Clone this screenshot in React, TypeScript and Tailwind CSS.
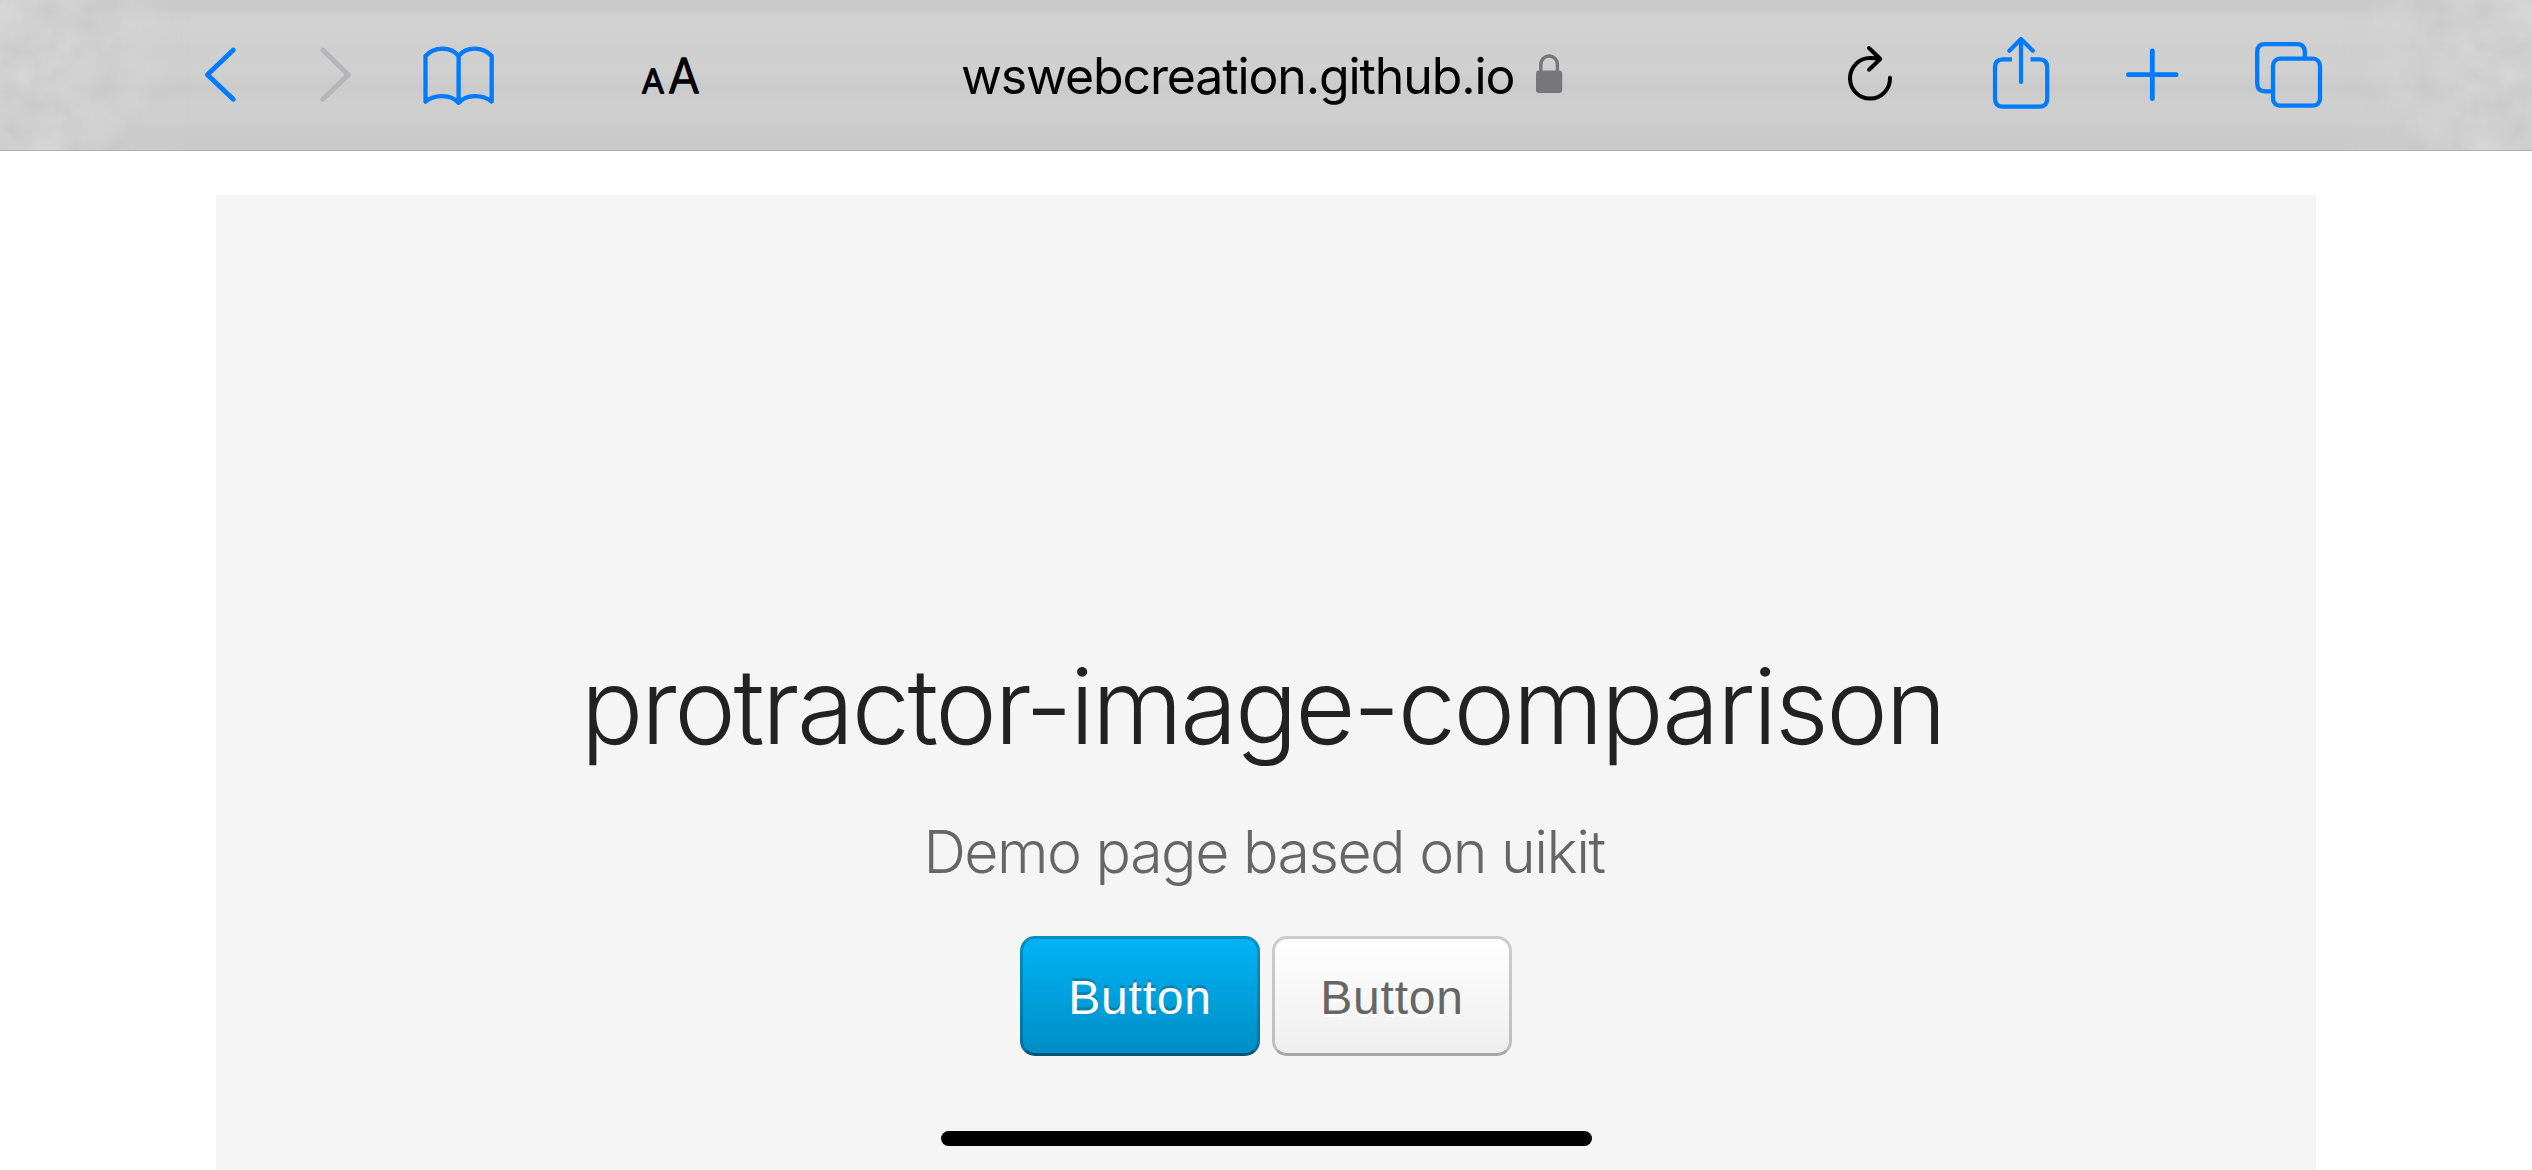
import React from "react";

const line = {
  fill: "none",
  stroke: "currentColor",
  strokeLinecap: "round" as const,
  strokeLinejoin: "round" as const,
};

function Mottle({ id, className }: { id: string; className: string }) {
  return (
    <svg className={className} viewBox="0 0 190 150" preserveAspectRatio="none">
      <filter id={id} x="0" y="0" width="100%" height="100%" colorInterpolationFilters="sRGB">
        <feTurbulence type="fractalNoise" baseFrequency="0.024" numOctaves="3" seed="4" />
        <feColorMatrix values="0.09 0 0 0 0.772  0.09 0 0 0 0.772  0.09 0 0 0 0.772  0 0 0 0 1" />
      </filter>
      <rect width="190" height="150" filter={`url(#${id})`} />
    </svg>
  );
}

function Toolbar() {
  return (
    <header className="relative flex h-[151px] w-full items-start border-b border-[#b0b0b0] bg-[linear-gradient(180deg,#c9c9c9_0px,#cacaca_9px,#d0d0d0_15px,#d2d2d2_24px,#d1d1d1_40px,#cfcfcf_45px,#d0d0d0_70px,#cbcbcb_88px,#cfcfcf_104px,#cfcfcf_118px,#cbcbcb_130px,#cacaca_150px)] text-[#007aff]">
      <Mottle
        id="mottle-left"
        className="absolute left-0 top-0 h-[150px] w-[190px] [mask-image:linear-gradient(90deg,#000_30%,transparent)]"
      />
      <Mottle
        id="mottle-right"
        className="absolute right-0 top-0 h-[150px] w-[190px] -scale-x-100 [mask-image:linear-gradient(90deg,#000_30%,transparent)]"
      />
      <svg className="ml-[200px] h-[150px] w-[40px]" viewBox="200 0 40 150" {...line} strokeWidth="4.8">
        <path d="M233.3 50L207.4 74.7L233.3 99.3" />
      </svg>
      <svg className="ml-[75px] h-[150px] w-[40px] text-[#b5b5b8]" viewBox="315 0 40 150" {...line} strokeWidth="4.8">
        <path d="M322.7 50L348.4 74.7L322.7 99.3" />
      </svg>
      <svg className="ml-[65px] h-[150px] w-[76px]" viewBox="420 0 76 150" {...line} strokeWidth="4.3">
        <path d="M458.6 56V102.8C451 94 434.5 94 425.5 101.6V56C434.5 46.2 451 46.2 458.6 56C466.2 46.2 482.7 46.2 491.7 56V101.6C482.7 94 466.2 94 458.6 102.8" />
      </svg>
      <svg className="ml-[139px] h-[150px] w-[75px]" viewBox="635 0 75 150">
        <g
          fill="#000"
          stroke="#000"
          strokeLinejoin="round"
          className="font-[Inter,sans-serif]"
          fontWeight="300"
        >
          <text x="641.8" y="92.6" fontSize="33" strokeWidth="1.8" textLength="22.5" lengthAdjust="spacingAndGlyphs">A</text>
          <text x="668.2" y="92.6" fontSize="47.5" strokeWidth="1.6" textLength="31.3" lengthAdjust="spacingAndGlyphs">A</text>
        </g>
      </svg>
      <div className="ml-[251px] w-[570px] whitespace-nowrap pt-[44px] font-[Inter,sans-serif] text-[50px] leading-[64px] tracking-[-1.12px] text-black">
        wswebcreation.github.io
      </div>
      <svg className="ml-[4px] h-[150px] w-[30px] text-[#77777b]" viewBox="1535 0 30 150">
        <rect x="1536" y="70.5" width="26.2" height="22.5" rx="3" fill="currentColor" />
        <path d="M1540.8 72V65C1540.8 53 1557.4 53 1557.4 65V72" fill="none" stroke="currentColor" strokeWidth="3.4" />
      </svg>
      <svg className="ml-[275px] h-[150px] w-[60px] text-black" viewBox="1840 0 60 150" {...line} strokeWidth="4">
        <path d="M1890 77.7A20 20.3 0 1 1 1870 58Q1875 58 1880 59M1869 48L1880.3 59L1869 69.7" />
      </svg>
      <svg className="ml-[90px] h-[150px] w-[62px]" viewBox="1990 0 62 150" {...line} strokeWidth="4.2">
        <path d="M2012 59.4H2003Q1995 59.4 1995 67.4V98.7Q1995 106.7 2003 106.7H2039.2Q2047.2 106.7 2047.2 98.7V67.4Q2047.2 59.4 2039.2 59.4H2030.5" strokeLinecap="butt" />
        <path d="M2021 39.5V82M2009.4 50.8L2021 39L2032.8 50.8" />
      </svg>
      <svg className="ml-[68px] h-[150px] w-[62px]" viewBox="2120 0 62 150" {...line} strokeWidth="4.8">
        <path d="M2152.3 50.8V98.7M2128.4 74.7H2176.2" />
      </svg>
      <svg className="ml-[68px] h-[150px] w-[80px]" viewBox="2250 0 80 150" {...line} strokeWidth="4.3">
        <path d="M2304.8 58V52Q2304.8 44.2 2297 44.2H2265Q2257.2 44.2 2257.2 52V83.5Q2257.2 91.3 2265 91.3H2272" strokeLinecap="butt" />
        <rect x="2273" y="58.7" width="47" height="47" rx="7" />
      </svg>
    </header>
  );
}

export default function App() {
  return (
    <div className="flex h-[1170px] w-[2532px] flex-col overflow-hidden bg-white">
      <Toolbar />
      <main className="relative mx-[216px] mt-[44px] flex flex-1 flex-col items-center bg-[#f5f5f5]">
        <h1 className="mr-[7px] mt-[446px] whitespace-nowrap font-[Inter,sans-serif] text-[104px] font-light leading-[130px] tracking-[-2.4px] text-[#222]">
          protractor-image-comparison
        </h1>
        <p className="mr-[4px] mt-[41px] whitespace-nowrap font-[Inter,sans-serif] text-[59px] font-light leading-[80px] tracking-[-1.5px] text-[#666]">
          Demo page based on uikit
        </p>
        <div className="mt-[44px] flex gap-[12px] font-['Liberation_Sans',sans-serif] text-[48px] leading-none tracking-[0.8px]">
          <button className="h-[120px] w-[240px] rounded-[15px] border-[3px] border-black/20 border-b-black/40 bg-[linear-gradient(180deg,#00b4f5,#008dc5)] bg-origin-border pt-[4px] text-white [text-shadow:0_-3px_0_rgba(0,0,0,0.2)]">
            Button
          </button>
          <button className="h-[120px] w-[240px] rounded-[15px] border-[3px] border-black/20 border-b-black/30 bg-[linear-gradient(180deg,#fff,#eee)] bg-origin-border pt-[4px] text-[#666] [text-shadow:0_3px_0_#fff]">
            Button
          </button>
        </div>
        <div className="absolute bottom-[24px] left-[725px] h-[15px] w-[651px] rounded-full bg-black" />
      </main>
    </div>
  );
}
